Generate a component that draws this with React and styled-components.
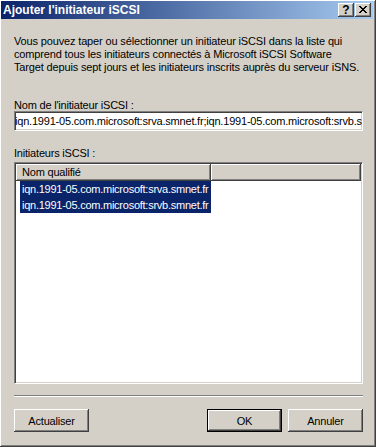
import React from "react";
import styled, { createGlobalStyle } from "styled-components";

const GlobalStyle = createGlobalStyle`
  body {
    margin: 0;
    font-family: "Liberation Sans", Arial, sans-serif;
  }
`;

const Window = styled.div`
  box-sizing: border-box;
  width: 376px;
  height: 447px;
  background-color: #d4d0c8;
  border-right: 1px solid #404040;
  border-bottom: 1px solid #404040;
  box-shadow: inset 1px 1px #ffffff, inset -1px -1px #808080;
  padding: 1px 2px 2px 1px;
  display: flex;
  flex-direction: column;
`;

const TitleBar = styled.div`
  height: 18px;
  display: flex;
  align-items: center;
  justify-content: space-between;
  padding: 0 2px;
  background: linear-gradient(to right, #0a246a, #a6caf0);
`;

const TitleText = styled.span`
  color: #ffffff;
  font-weight: bold;
  font-size: 12px;
  line-height: 18px;
  white-space: nowrap;
`;

const TitleButtons = styled.div`
  display: flex;
  gap: 1px;
`;

const CaptionButton = styled.div`
  box-sizing: border-box;
  width: 16px;
  height: 14px;
  background-color: #d4d0c8;
  box-shadow: inset -1px -1px #404040, inset 1px 1px #ffffff,
    inset -2px -2px #808080;
  display: flex;
  align-items: center;
  justify-content: center;
  font-weight: bold;
  font-size: 12px;
  line-height: 14px;
  color: #000000;
  padding-bottom: 1px;
`;

const Body = styled.div`
  display: flex;
  flex-direction: column;
  padding: 16px 10px 0 13px;
`;

const Intro = styled.p`
  margin: 0;
  font-size: 11px;
  line-height: 13px;
  letter-spacing: -0.15px;
  color: #000000;
  white-space: nowrap;
`;

const Label = styled.div`
  margin-top: ${(p) => p.$top}px;
  font-size: 11px;
  line-height: ${(p) => p.$lh}px;
  letter-spacing: -0.2px;
  color: #000000;
`;

const TextInput = styled.input`
  box-sizing: border-box;
  width: 100%;
  height: 20px;
  margin: 0;
  padding: 0;
  border-top: 1px solid #808080;
  border-left: 1px solid #808080;
  border-right: 1px solid #ffffff;
  border-bottom: 1px solid #ffffff;
  box-shadow: inset 1px 1px #404040, inset -1px -1px #d4d0c8;
  background: #ffffff;
  font-family: "Liberation Sans", Arial, sans-serif;
  font-size: 11px;
  letter-spacing: -0.2px;
  color: #000000;
  outline: none;
`;

const ListView = styled.div`
  box-sizing: border-box;
  margin-top: 2px;
  height: 222px;
  background: #ffffff;
  border-top: 1px solid #808080;
  border-left: 1px solid #808080;
  border-right: 1px solid #ffffff;
  border-bottom: 1px solid #ffffff;
  box-shadow: inset 1px 1px #404040, inset -1px -1px #d4d0c8;
  padding: 1px;
  display: flex;
  flex-direction: column;
`;

const HeaderRow = styled.div`
  display: flex;
  height: 17px;
`;

const HeaderCell = styled.div`
  box-sizing: border-box;
  width: ${(p) => (p.$width ? `${p.$width}px` : "auto")};
  flex: ${(p) => (p.$width ? "none" : "1")};
  background: #d4d0c8;
  box-shadow: inset -1px -1px #404040, inset 1px 1px #ffffff,
    inset -2px -2px #808080;
  padding-left: 6px;
  font-size: 11px;
  line-height: 17px;
  letter-spacing: -0.2px;
  color: #000000;
  white-space: nowrap;
`;

const Row = styled.div`
  height: 16px;
  padding-left: 4px;
  display: flex;
`;

const RowLabel = styled.span`
  padding: 0 2px;
  background: ${(p) => (p.$selected ? "#0a246a" : "transparent")};
  color: ${(p) => (p.$selected ? "#ffffff" : "#000000")};
  font-size: 11px;
  line-height: 16px;
  letter-spacing: -0.25px;
  white-space: nowrap;
`;

const Separator = styled.div`
  margin-top: 11px;
  border-top: 1px solid #808080;
  border-bottom: 1px solid #ffffff;
`;

const ButtonRow = styled.div`
  margin-top: 12px;
  display: flex;
  gap: 6px;
`;

const Spacer = styled.div`
  flex: 1;
`;

const Button = styled.button`
  box-sizing: border-box;
  width: 75px;
  height: 23px;
  margin: 0;
  padding: 0;
  background: #d4d0c8;
  border: ${(p) => (p.$default ? "1px solid #000000" : "none")};
  box-shadow: ${(p) =>
    p.$default
      ? "inset -1px -1px #404040, inset 1px 1px #ffffff, inset -2px -2px #808080"
      : "inset -1px -1px #404040, inset 1px 1px #ffffff, inset -2px -2px #808080, inset 2px 2px #d4d0c8"};
  font-family: "Liberation Sans", Arial, sans-serif;
  font-size: 11px;
  letter-spacing: -0.2px;
  color: #000000;
`;

function CloseGlyph() {
  const rows = ["XX....XX", ".XX..XX.", "..XXXX..", "...XX...", "..XXXX..", ".XX..XX.", "XX....XX"];
  return (
    <svg width="8" height="7" viewBox="0 0 8 7" shapeRendering="crispEdges">
      {rows.map((r, y) =>
        r.split("").map((c, x) =>
          c === "X" ? <rect key={`${x}-${y}`} x={x} y={y} width="1" height="1" fill="#000" /> : null
        )
      )}
    </svg>
  );
}

const initiators = [
  "iqn.1991-05.com.microsoft:srva.smnet.fr",
  "iqn.1991-05.com.microsoft:srvb.smnet.fr",
];

export default function App() {
  return (
    <>
      <GlobalStyle />
      <Window>
        <TitleBar>
          <TitleText>Ajouter l'initiateur iSCSI</TitleText>
          <TitleButtons>
            <CaptionButton>?</CaptionButton>
            <CaptionButton>
              <CloseGlyph />
            </CaptionButton>
          </TitleButtons>
        </TitleBar>
        <Body>
          <Intro>
            Vous pouvez taper ou sélectionner un initiateur iSCSI dans la liste qui
            <br />
            comprend tous les initiateurs connectés à Microsoft iSCSI Software
            <br />
            Target depuis sept jours et les initiateurs inscrits auprès du serveur iSNS.
          </Intro>
          <Label $top={25} $lh={12}>Nom de l'initiateur iSCSI :</Label>
          <TextInput
            readOnly
            value="iqn.1991-05.com.microsoft:srva.smnet.fr;iqn.1991-05.com.microsoft:srvb.smnet.fr"
          />
          <Label $top={16} $lh={13}>Initiateurs iSCSI :</Label>
          <ListView>
            <HeaderRow>
              <HeaderCell $width={195}>Nom qualifié</HeaderCell>
              <HeaderCell />
            </HeaderRow>
            {initiators.map((name) => (
              <Row key={name}>
                <RowLabel $selected>{name}</RowLabel>
              </Row>
            ))}
          </ListView>
          <Separator />
          <ButtonRow>
            <Button>Actualiser</Button>
            <Spacer />
            <Button $default>OK</Button>
            <Button>Annuler</Button>
          </ButtonRow>
        </Body>
      </Window>
    </>
  );
}
